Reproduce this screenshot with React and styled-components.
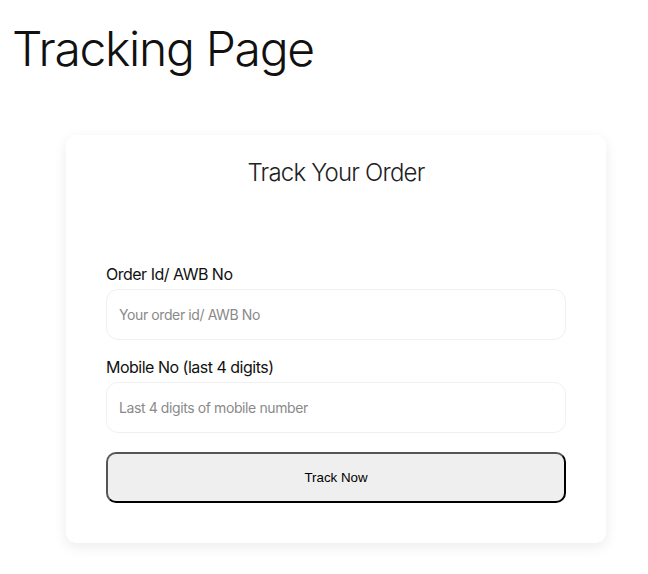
import React from 'react';
import styled, { createGlobalStyle } from 'styled-components';

const GlobalStyle = createGlobalStyle`
    body {
        margin: 0;
        background: #ffffff;
        font-family: Inter, 'Noto Sans', sans-serif;
        color: #111;
    }
`;

const Page = styled.div`
    padding: 20px 12px 40px;
`;

const Title = styled.h1`
    margin: 0;
    font-size: 48px;
    line-height: 58px;
    font-weight: 300;
    letter-spacing: -1.3px;
    color: #111;
`;

const Card = styled.div`
    box-sizing: border-box;
    width: 540px;
    margin: 57px 0 0 54px;
    padding: 22px 40px 40px;
    background: #fff;
    border-radius: 10px;
    box-shadow: 0 4px 14px rgba(0, 0, 0, 0.08);
`;

const CardTitle = styled.h2`
    margin: 0 0 74px;
    text-align: center;
    font-size: 24px;
    line-height: 32px;
    font-weight: 300;
    letter-spacing: -0.8px;
    color: #222;
`;

const Field = styled.div`
    display: flex;
    flex-direction: column;
    gap: 4px;
    margin-bottom: 16px;
`;

const Label = styled.label`
    font-size: 16px;
    line-height: 22px;
    font-weight: 400;
    letter-spacing: -0.5px;
    color: #111;
`;

const Input = styled.input`
    box-sizing: border-box;
    height: 51px;
    padding: 0 12px;
    border: 1px solid #f0f0f0;
    border-radius: 12px;
    font-family: Inter, 'Noto Sans', sans-serif;
    font-size: 14px;
    letter-spacing: -0.4px;
    outline: none;
    &::placeholder {
        color: #8a8a8a;
    }
`;

const Button = styled.button`
    box-sizing: border-box;
    width: 100%;
    height: 51px;
    margin-top: 3px;
    background: #efefef;
    border: 2px solid;
    border-color: #555 #000 #000 #555;
    border-radius: 10px;
    font-family: 'Liberation Sans', Arial, sans-serif;
    font-size: 13.33px;
    color: #000;
    cursor: pointer;
`;

export default function App() {
    return (
        <>
            <GlobalStyle />
            <Page>
                <Title>Tracking Page</Title>
                <Card>
                    <CardTitle>Track Your Order</CardTitle>
                    <Field>
                        <Label>Order Id/ AWB No</Label>
                        <Input placeholder="Your order id/ AWB No" />
                    </Field>
                    <Field>
                        <Label>Mobile No (last 4 digits)</Label>
                        <Input placeholder="Last 4 digits of mobile number" />
                    </Field>
                    <Button>Track Now</Button>
                </Card>
            </Page>
        </>
    );
}
